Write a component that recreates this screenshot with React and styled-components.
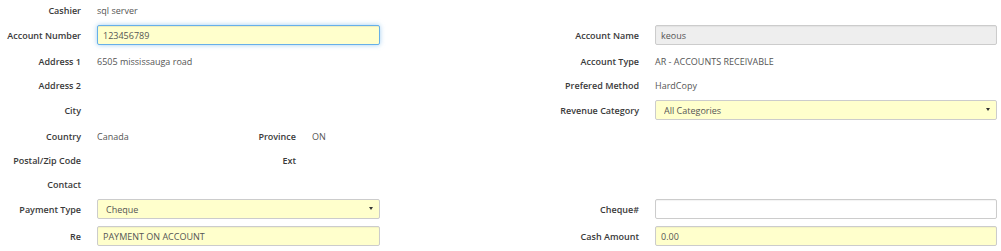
import React from 'react'
import styled, { createGlobalStyle } from 'styled-components'

const GlobalStyle = createGlobalStyle`
  body {
    margin: 0;
    background: #fff;
    font-family: "Open Sans", "Liberation Sans", sans-serif;
    font-size: 9px;
    color: #555;
  }
`

function App() {
  return (
    <>
      <GlobalStyle />
      <Form>
        <Label>Cashier</Label>
        <Value>sql server</Value>
        <span />
        <span />

        <Label $control>Account Number</Label>
        <Cell>
          <Input $focused readOnly value="123456789" />
        </Cell>
        <Label $control>Account Name</Label>
        <Cell>
          <Input $variant="disabled" readOnly value="keous" />
        </Cell>

        <Label>Address 1</Label>
        <Value>6505 mississauga road</Value>
        <Label>Account Type</Label>
        <Value>AR - ACCOUNTS RECEIVABLE</Value>

        <Label>Address 2</Label>
        <Value />
        <Label>Prefered Method</Label>
        <Value>HardCopy</Value>

        <Label $control>City</Label>
        <Value />
        <Label $control>Revenue Category</Label>
        <Cell>
          <SelectBox>
            <Select defaultValue="all">
              <option value="all">All Categories</option>
            </Select>
          </SelectBox>
        </Cell>

        <Label>Country</Label>
        <SubGrid>
          <Value>Canada</Value>
          <Label>Province</Label>
          <Value>ON</Value>
        </SubGrid>
        <span />
        <span />

        <Label>Postal/Zip Code</Label>
        <SubGrid>
          <Value />
          <Label>Ext</Label>
          <Value />
        </SubGrid>
        <span />
        <span />

        <Label>Contact</Label>
        <Value />
        <span />
        <span />

        <Label $control>Payment Type</Label>
        <Cell>
          <SelectBox>
            <Select defaultValue="cheque">
              <option value="cheque">Cheque</option>
            </Select>
          </SelectBox>
        </Cell>
        <Label $control>Cheque#</Label>
        <Cell>
          <Input $variant="plain" readOnly value="" />
        </Cell>

        <Label $control>Re</Label>
        <Cell>
          <Input readOnly value="PAYMENT ON ACCOUNT" />
        </Cell>
        <Label $control>Cash Amount</Label>
        <Cell>
          <Input readOnly value="0.00" />
        </Cell>
      </Form>
    </>
  )
}

export default App

const Form = styled.div`
  display: grid;
  grid-template-columns: 81px 283px 243px 342px;
  grid-auto-rows: minmax(20px, auto);
  column-gap: 16px;
  row-gap: 4px;
  width: 997px;
`

const Label = styled.div`
  display: flex;
  align-items: center;
  justify-content: flex-end;
  min-height: 20px;
  font-weight: 600;
  color: #3a3a3a;
  white-space: nowrap;
  padding: ${(p) => (p.$control ? '1px 0 2px' : '0')};
`

const Value = styled.div`
  display: flex;
  align-items: center;
  min-height: 20px;
  color: #555;
  white-space: nowrap;
`

const Cell = styled.div`
  padding: 1px 0 2px;
`

const SubGrid = styled.div`
  display: grid;
  grid-template-columns: 126px 57px 1fr;
  column-gap: 16px;
`

const bg = {
  disabled: '#eeeeee',
  plain: '#ffffff',
}

const Input = styled.input`
  display: block;
  box-sizing: border-box;
  width: 100%;
  height: 20px;
  margin: 0;
  padding: 0 5px;
  font-family: inherit;
  font-size: 9px;
  color: #555;
  background: ${(p) => bg[p.$variant] || '#ffffcc'};
  border: 1px solid ${(p) => (p.$focused ? '#66afe9' : '#ccc')};
  border-radius: 2px;
  box-shadow: ${(p) =>
    p.$focused
      ? 'inset 0 1px 1px rgba(0,0,0,.075), 0 0 5px rgba(102,175,233,.6)'
      : 'inset 0 1px 1px rgba(0,0,0,.05)'};
  outline: none;
`

const SelectBox = styled.div`
  position: relative;

  &::after {
    content: '';
    position: absolute;
    right: 7px;
    top: 8px;
    border-left: 2.5px solid transparent;
    border-right: 2.5px solid transparent;
    border-top: 3px solid #333;
    pointer-events: none;
  }
`

const Select = styled.select`
  display: block;
  box-sizing: border-box;
  width: 100%;
  height: 20px;
  margin: 0;
  padding: 0 0 0 8px;
  font-family: inherit;
  font-size: 9px;
  color: #555;
  background: #ffffcc;
  border: 1px solid #ccc;
  border-radius: 2px;
  appearance: none;
  -webkit-appearance: none;
  outline: none;
`
